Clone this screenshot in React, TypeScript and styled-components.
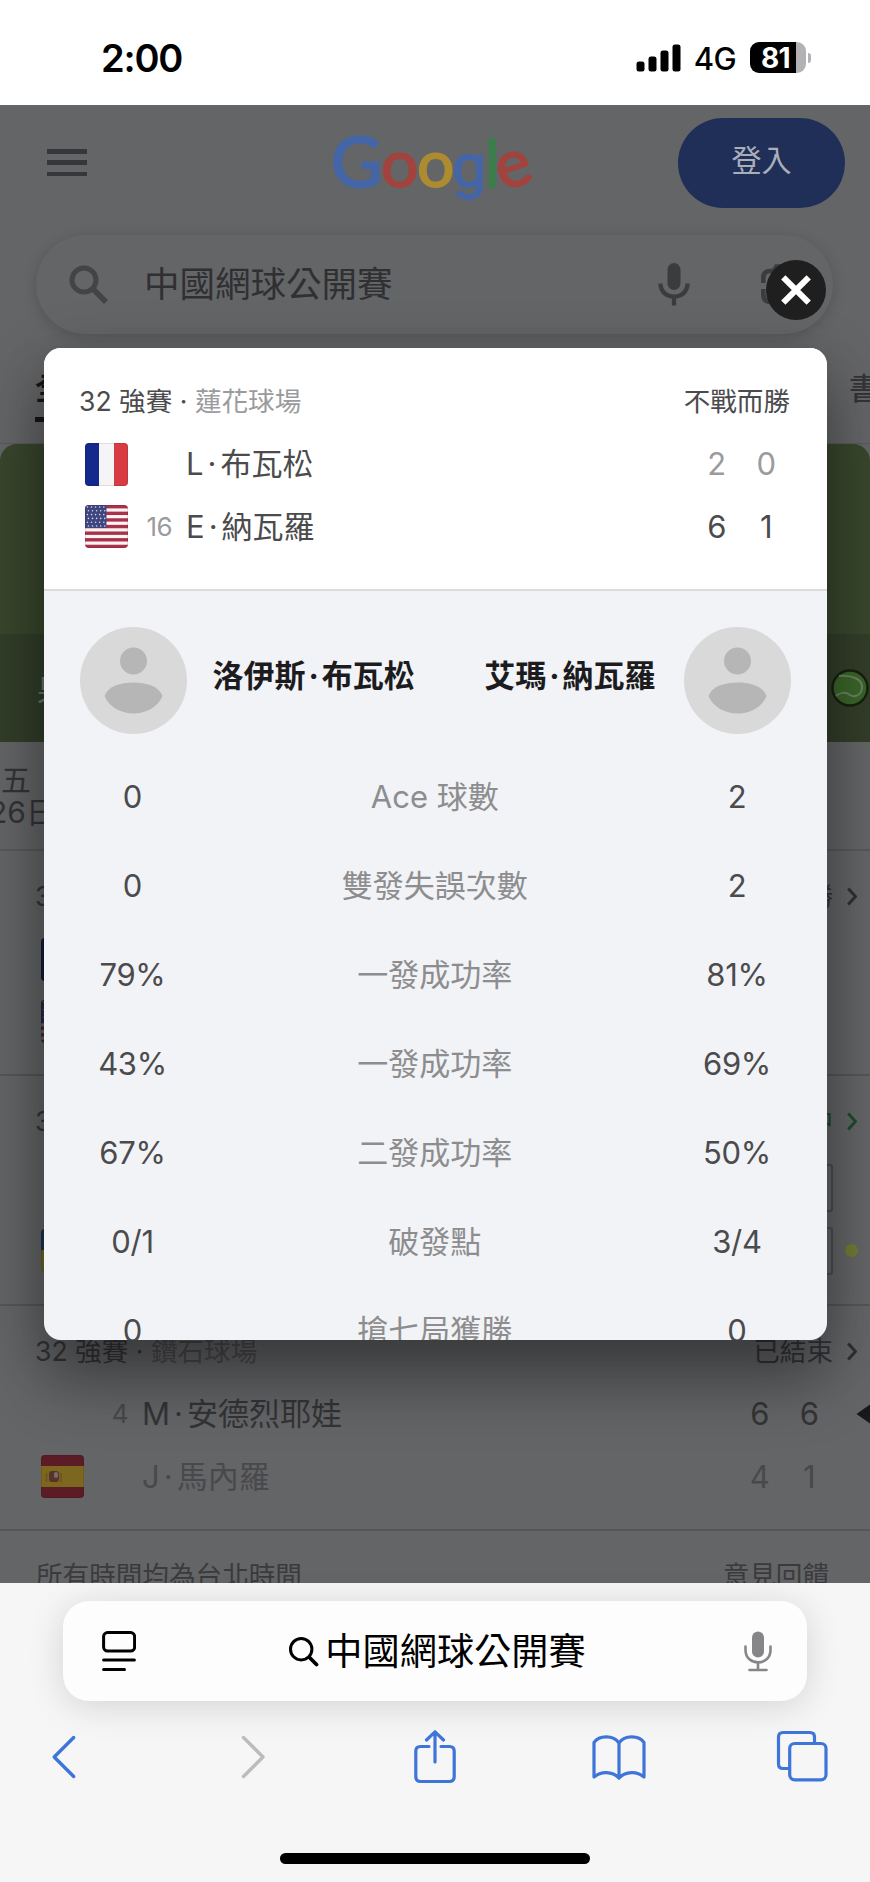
import React from 'react';
import styled, { createGlobalStyle } from 'styled-components';

const GlobalStyle = createGlobalStyle`
  * { box-sizing: border-box; }
  html, body { margin: 0; padding: 0; }
  body {
    width: 870px;
    height: 1882px;
    overflow: hidden;
    background: #fff;
    font-family: Inter, "Noto Sans CJK TC", sans-serif;
    font-size: 31px;
    -webkit-font-smoothing: antialiased;
  }
  svg { display: block; flex: none; }
`;

const Phone = styled.div`
  position: relative;
  width: 870px;
  height: 1882px;
  display: flex;
  flex-direction: column;
  overflow: hidden;
`;

/* ---------- status bar ---------- */

const StatusBar = styled.header`
  height: 105px;
  flex: none;
  display: flex;
  align-items: center;
  justify-content: space-between;
  padding: 10px 59px 0 101px;
  background: #fff;
  color: #000;
`;

const Clock = styled.time`
  font-size: 38px;
  font-weight: 600;
  line-height: 44px;
  letter-spacing: -1.2px;
`;

const StatusIcons = styled.div`
  display: flex;
  align-items: center;
`;

const Network = styled.span`
  width: 56px;
  text-align: center;
  margin: 2px 0 0 6px;
  font-size: 31px;
  font-weight: 450;
  line-height: 32px;
  letter-spacing: -0.5px;
`;

const Battery = styled.div`
  width: 56px;
  height: 31px;
  margin: 0 2px 0 7px;
  border-radius: 9px;
  background: linear-gradient(90deg, #000 46px, #b2b2b4 46px);
  color: #fff;
  font-size: 28px;
  font-weight: 700;
  line-height: 32px;
  letter-spacing: -0.8px;
  padding-left: 11px;
`;

const BatteryCap = styled.div`
  width: 3px;
  height: 10px;
  border-radius: 0 4px 4px 0;
  background: #b2b2b4;
`;

/* ---------- dimmed page ---------- */

const Page = styled.main`
  height: 1478px;
  flex: none;
  overflow: hidden;
  display: flex;
  flex-direction: column;
  background: #646567;
  color: #343437;
`;

const PageHeader = styled.div`
  height: 130px;
  flex: none;
  display: flex;
  padding: 13px 25px 0 47px;
`;

const MenuButton = styled.div`
  width: 40px;
  height: 27px;
  margin-top: 31px;
  display: flex;
  flex-direction: column;
  justify-content: space-between;
`;

const MenuLine = styled.span`
  height: 4.5px;
  background: #37363a;
`;

const LogoBox = styled.div`
  margin: 12px 0 0 245px;
`;

const SignIn = styled.div`
  width: 167px;
  height: 90px;
  margin-left: auto;
  border-radius: 45px;
  background: #1f2f57;
  color: #a9aeb9;
  font-size: 30px;
  line-height: 85px;
  text-align: center;
`;

const SearchPill = styled.div`
  width: 797px;
  height: 99px;
  flex: none;
  margin-left: 36px;
  border-radius: 50px;
  background: #646567;
  box-shadow: 0 3px 14px rgba(0, 0, 0, 0.17);
  display: flex;
  align-items: center;
  padding: 0 32px 0 33px;
  color: #303033;
  font-size: 35.5px;
`;

const Query = styled.span`
  flex: 1;
  padding: 1px 0 0 35px;
  line-height: 44px;
`;

const LensBox = styled.div`
  margin-left: 71px;
`;

const Tabs = styled.nav`
  height: 110px;
  flex: none;
  display: flex;
  justify-content: space-between;
  padding: 33px 0 0 35px;
  font-size: 30px;
  line-height: 42px;
  border-bottom: 1px solid #5a5a5c;
`;

const Tab = styled.span<{ $active?: boolean }>`
  width: ${(p) => (p.$active ? '60px' : '21px')};
  height: 55px;
  overflow: hidden;
  white-space: nowrap;
  color: ${(p) => (p.$active ? '#161617' : '#343437')};
  font-weight: ${(p) => (p.$active ? 700 : 500)};
  border-bottom: ${(p) => (p.$active ? '5px solid #161617' : 'none')};
`;

const Banner = styled.div`
  height: 298px;
  flex: none;
  display: flex;
  flex-direction: column;
  border-radius: 17px 17px 0 0;
  overflow: hidden;
  background: #39472d;
`;

const BannerStrip = styled.div`
  margin-top: auto;
  height: 108px;
  display: flex;
  align-items: center;
  justify-content: space-between;
  padding: 0 1px 0 37px;
  background: #323e29;
  color: #6e756a;
  font-size: 30px;
`;

const DateStrip = styled.div`
  height: 109px;
  flex: none;
  padding: 22px 0 0 1px;
  border-bottom: 2px solid #59595b;
  font-size: 30px;
  line-height: 32px;
`;

const DateLine = styled.div<{ $shift?: number }>`
  margin-left: ${(p) => p.$shift ?? 0}px;
`;

const Card = styled.section<{ $height: number }>`
  height: ${(p) => p.$height}px;
  flex: none;
  padding: 30px 0 0 35px;
  border-bottom: 2px solid #565658;
`;

const PageFooter = styled.div`
  display: flex;
  justify-content: space-between;
  padding: 25px 41px 0 36px;
  font-size: 26.6px;
  line-height: 38px;
  color: #3b3b3e;
`;

/* ---------- match summary ---------- */

const TitleRow = styled.div<{ $live?: boolean }>`
  display: flex;
  justify-content: space-between;
  height: ${(p) => (p.$live ? 51 : 47)}px;
  font-size: 26.6px;
  line-height: 30px;
`;

const Venue = styled.span<{ $color: string }>`
  color: ${(p) => p.$color};
`;

const StatusCell = styled.div<{ $color?: string; $page?: boolean }>`
  display: flex;
  align-items: center;
  height: 30px;
  width: ${(p) => (p.$page ? '150px' : 'auto')};
  justify-content: flex-end;
  gap: 14px;
  padding-right: ${(p) => (p.$page ? '13px' : '1px')};
  color: ${(p) => p.$color ?? 'inherit'};
`;

const PlayerRow = styled.div<{ $color: string }>`
  height: 62.5px;
  display: flex;
  align-items: center;
  color: ${(p) => p.$color};
`;

const FlagSlot = styled.div`
  width: 43px;
  height: 43px;
  margin-left: 6px;
  flex: none;
  display: flex;
`;

const Seed = styled.span<{ $color: string }>`
  width: 44px;
  text-align: right;
  font-size: 26px;
  letter-spacing: -0.6px;
  line-height: 40px;
  color: ${(p) => p.$color};
`;

const PlayerName = styled.span`
  flex: 1;
  padding-left: 14px;
  line-height: 40px;
  white-space: nowrap;
`;

const NameDot = styled.span<{ $gap: number }>`
  padding: 0 ${(p) => p.$gap}px;
`;

const Score = styled.span<{ $color?: string }>`
  width: 49.5px;
  text-align: center;
  line-height: 40px;
  color: ${(p) => p.$color ?? 'inherit'};
`;

const RowEnd = styled.div<{ $width: number }>`
  width: ${(p) => p.$width}px;
  flex: none;
  display: flex;
  justify-content: flex-end;
`;

const ScoreBox = styled.div`
  width: 50px;
  height: 48px;
  border: 2px solid #4d4d4f;
  border-radius: 3px;
  margin-left: auto;
`;

const ServeDot = styled.span<{ $on: boolean }>`
  width: 13px;
  height: 13px;
  margin: 0 12px;
  border-radius: 50%;
  background: ${(p) => (p.$on ? '#727b35' : 'transparent')};
`;

/* ---------- dialog ---------- */

const Dialog = styled.section`
  position: absolute;
  left: 44px;
  top: 348px;
  width: 782.5px;
  height: 992px;
  border-radius: 17px;
  overflow: hidden;
  background: #f2f3f6;
  color: #4b4b4d;
`;

const DialogShade = styled.div`
  position: absolute;
  left: 0;
  top: 105px;
  width: 870px;
  height: 1478px;
  overflow: hidden;

  &::before {
    content: '';
    position: absolute;
    left: 44px;
    top: 243px;
    width: 782px;
    height: 992px;
    border-radius: 17px;
    box-shadow: 0 11px 58px rgba(0, 0, 0, 0.22), 0 45px 62px rgba(0, 0, 0, 0.3);
  }
`;

const DialogHead = styled.div`
  height: 243px;
  padding: 38px 35.5px 0 35px;
  background: #fff;
  border-bottom: 2px solid #dcdcdf;
`;

const Versus = styled.div`
  display: flex;
  align-items: center;
  padding: 35.5px 36px 0 35.5px;
  color: #1c1c1e;
  font-weight: 700;
`;

const VersusName = styled.span<{ $right?: boolean }>`
  flex: 1;
  padding: 0 28px 9px 26px;
  text-align: ${(p) => (p.$right ? 'right' : 'left')};
  line-height: 40px;
  white-space: nowrap;
`;

const Stats = styled.div`
  padding: 18px 36px 0 35px;
`;

const StatRow = styled.div`
  display: grid;
  grid-template-columns: 107px 1fr 107px;
  height: 89.1px;
  line-height: 89px;
  text-align: center;
`;

const StatLabel = styled.span`
  color: #8d8d8f;
`;

const StatValue = styled.span`
  letter-spacing: -0.3px;
`;

const CloseButton = styled.div`
  position: absolute;
  left: 766px;
  top: 260px;
  width: 60px;
  height: 60px;
  border-radius: 50%;
  background: #1f1f1f;
  display: flex;
  align-items: center;
  justify-content: center;
`;

/* ---------- browser chrome ---------- */

const BrowserChrome = styled.footer`
  flex: 1;
  display: flex;
  flex-direction: column;
  align-items: center;
  padding-top: 18px;
  background: #f6f6f7;
`;

const AddressBar = styled.div`
  width: 744px;
  height: 100px;
  flex: none;
  display: flex;
  align-items: center;
  justify-content: space-between;
  padding: 0 35px 0 39px;
  border-radius: 26px;
  background: #fdfdfe;
  box-shadow: 0 5px 36px rgba(0, 0, 0, 0.14);
`;

const Address = styled.div`
  display: flex;
  align-items: center;
  gap: 6px;
  color: #000;
  font-size: 37.2px;
  line-height: 48px;
  padding: 2px 5px 0 0;
`;

const Toolbar = styled.div`
  width: 870px;
  height: 112px;
  display: flex;
  align-items: center;
  justify-content: space-between;
  padding: 0 40px 0 39px;
  margin-bottom: 40px;
`;

const HomeBar = styled.div`
  width: 310px;
  height: 11px;
  border-radius: 6px;
  background: #000;
`;

/* ---------- drawings ---------- */

const SignalIcon = () => (
  <svg width="45" height="28" viewBox="0 0 45 28">
    <rect x="0.5" y="17.5" width="8" height="10" rx="2.5" />
    <rect x="12.5" y="12.5" width="8" height="15" rx="2.5" />
    <rect x="24.5" y="6.5" width="8" height="21" rx="2.5" />
    <rect x="36.5" y="0.5" width="8" height="27" rx="2.5" />
  </svg>
);

const LogoText = styled.text`
  font-family: Lato, sans-serif;
  font-size: 66px;
  stroke-width: 1.8px;
`;

const LogoLetter = styled.tspan<{ $color: string }>`
  fill: ${(p) => p.$color};
  stroke: ${(p) => p.$color};
`;

const LogoCapital = styled(LogoLetter)`
  font-size: 70px;
  stroke-width: 2.4px;
`;

const LogoTail = styled(LogoLetter)`
  font-family: Roboto, sans-serif;
  font-size: 61px;
  stroke-width: 1.4px;
`;

const GoogleLogo = () => (
  <svg width="204" height="80" viewBox="0 0 204 80" overflow="visible">
    <LogoText y="56.5">
      <LogoCapital x="-1" $color="#4566a6">G</LogoCapital>
      <LogoLetter x="49" $color="#a2433e">o</LogoLetter>
      <LogoLetter x="85" $color="#ad8b30">o</LogoLetter>
      <LogoTail x="120" $color="#4566a6">g</LogoTail>
      <LogoLetter x="152.5" $color="#3d7c4c">l</LogoLetter>
      <LogoLetter x="170.5" y="61" rotate="-18" $color="#a2433e">e</LogoLetter>
    </LogoText>
  </svg>
);

const PageSearchIcon = () => (
  <svg width="40" height="40" viewBox="0 0 40 40" fill="none" stroke="#434446">
    <circle cx="15" cy="15" r="12" strokeWidth="5" />
    <path d="M24 24L37 37" strokeWidth="5.5" />
  </svg>
);

const PageMicIcon = () => (
  <svg width="32" height="43" viewBox="0 0 32 43" fill="none" stroke="#3c3c3f">
    <rect x="9.5" y="0" width="13" height="27" rx="6.5" fill="#3c3c3f" stroke="none" />
    <path d="M2.5 20.5C2.5 38 29.5 38 29.5 20.5M16 33v9.5" strokeWidth="4.3" />
  </svg>
);

const LensIcon = () => (
  <svg width="40" height="42" viewBox="0 0 40 42" fill="none" stroke="#3c3c3f" strokeWidth="4.6">
    <path d="M2.3 19v-5Q2.3 7 9.5 7h3l3-4.5h9l3 4.500h3Q37.700 7 37.700 14v5M2.300 25v5Q2.300 38 10 38h10" />
    <circle cx="20" cy="22" r="7" />
  </svg>
);

const BallIcon = () => (
  <svg width="38" height="38" viewBox="0 0 38 38" fill="none">
    <circle cx="19" cy="19" r="17.500" fill="#3a6529" stroke="#17210f" strokeWidth="2.400" />
    <path d="M8 7C21 6 32 10 31 19S22 28 19 26C14 22 8 24 5 27" stroke="#6b8063" strokeWidth="2" />
  </svg>
);

const Chevron = ({ color }: { color: string }) => (
  <svg width="10" height="19" viewBox="0 0 10 19" fill="none" stroke={color} strokeWidth="3">
    <path d="M1.200 1.500L8.500 9.500L1.200 17.500" />
  </svg>
);

const WinnerMark = () => (
  <svg width="14" height="20" viewBox="0 0 14 20">
    <path d="M14 0.500L0.500 10L14 19.500Z" fill="#19191b" />
  </svg>
);

type Country = 'fr' | 'us' | 'es' | 'ua';

const Flag = ({ country, dim }: { country: Country; dim?: boolean }) => {
  const pick = (bright: string, dark: string) => (dim ? dark : bright);
  const clip = `clip-${country}-${dim ? 'page' : 'dialog'}`;
  return (
    <svg width="43" height="43" viewBox="0 0 43 43">
      <clipPath id={clip}>
        <rect width="43" height="43" rx="4" />
      </clipPath>
      <g clipPath={`url(#${clip})`}>
        {country === 'fr' && (
          <>
            <rect width="43" height="43" fill={pick('#f5f5f7', '#656567')} />
            <rect width="14" height="43" fill={pick('#15288c', '#181c3f')} />
            <rect x="29" width="14" height="43" fill={pick('#d83c43', '#5b2024')} />
          </>
        )}
        {country === 'us' && (
          <>
            <rect width="43" height="43" fill={pick('#fbf4f5', '#656567')} />
            {[0, 1, 2, 3, 4, 5, 6].map((i) => (
              <rect key={i} y={i * 6.62} width="43" height="3.400" fill={pick('#a9324a', '#4b2a31')} />
            ))}
            <rect width="21.500" height="23" fill={pick('#3f457f', '#262a45')} />
            {Array.from({ length: 30 }, (_, i) => (
              <circle
                key={i}
                cx={2.400 + (i % 5) * 4.100 + (Math.floor(i / 5) % 2)}
                cy={2 + Math.floor(i / 5) * 3.800}
                r="0.800"
                fill={pick('#d5d6e6', '#555766')}
              />
            ))}
          </>
        )}
        {country === 'es' && (
          <>
            <rect width="43" height="43" fill="#5b1c26" />
            <rect y="11" width="43" height="21" fill="#7d661e" />
            <rect x="8" y="16" width="10" height="11" rx="3" fill="#56322a" />
            <rect x="13" y="17" width="4" height="6" rx="2" fill="#7b6c68" />
            <path d="M5.500 18v9M20 18v9" stroke="#69502b" strokeWidth="1.500" />
          </>
        )}
        {country === 'ua' && (
          <>
            <rect width="43" height="21" fill="#1d3557" />
            <rect y="21" width="43" height="22" fill="#6e6a24" />
          </>
        )}
      </g>
      <rect x="0.500" y="0.500" width="42" height="42" rx="3.500" fill="none" stroke="#00000018" />
    </svg>
  );
};

const Avatar = () => (
  <svg width="107" height="107" viewBox="0 0 107 107">
    <circle cx="53.500" cy="53.500" r="53.500" fill="#d9d9d9" />
    <circle cx="53.500" cy="34" r="13.500" fill="#b6b6b6" />
    <path d="M24.500 69C28 59 41 55.500 53.500 55.500S79 59 82.500 69C78 80 66 86.500 53.500 86.500S29 80 24.500 69Z" fill="#b6b6b6" />
  </svg>
);

const CloseIcon = () => (
  <svg width="32" height="32" viewBox="0 0 32 32" stroke="#fff" strokeWidth="6">
    <path d="M3.300 3.300L28.700 28.700M28.700 3.300L3.300 28.700" />
  </svg>
);

const ReaderIcon = () => (
  <svg width="34" height="41" viewBox="0 0 34 41" fill="none" stroke="#000" strokeWidth="3" strokeLinecap="round">
    <rect x="1.600" y="1.600" width="31" height="18.500" rx="4" />
    <path d="M1.600 29H32.400M1.600 38.600H22.500" />
  </svg>
);

const AddressSearchIcon = () => (
  <svg width="30" height="30" viewBox="0 0 30 30" fill="none" stroke="#000" strokeLinecap="round">
    <circle cx="12.200" cy="12.200" r="10.700" strokeWidth="3" />
    <path d="M20.500 20.500L27.500 27.500" strokeWidth="3.800" />
  </svg>
);

const AddressMicIcon = () => (
  <svg width="28" height="41" viewBox="0 0 28 41" fill="none" stroke="#868688" strokeWidth="2.600" strokeLinecap="round">
    <rect x="8" y="0.500" width="12" height="26" rx="6" fill="#868688" stroke="none" />
    <path d="M1.500 15.500V19C1.500 35.500 26.500 35.500 26.500 19V15.500M14 32V38.500M5.500 39H22.500" />
  </svg>
);

const blue = '#3f75d8';

const BackIcon = () => (
  <svg width="54" height="54" viewBox="0 0 54 54" fill="none" stroke={blue} strokeWidth="3.400" strokeLinecap="round" strokeLinejoin="round">
    <path d="M34.700 7.500L15.200 27L34.700 46.500" />
  </svg>
);

const ForwardIcon = () => (
  <svg width="54" height="54" viewBox="0 0 54 54" fill="none" stroke="#bcbcbe" strokeWidth="3.400" strokeLinecap="round" strokeLinejoin="round">
    <path d="M20.500 7.500L40 27L20.500 46.500" />
  </svg>
);

const ShareIcon = () => (
  <svg width="54" height="54" viewBox="-2 0 54 54" fill="none" stroke={blue} strokeWidth="3.200" strokeLinecap="round" strokeLinejoin="round">
    <path d="M19 16.500H10.500Q5.800 16.500 5.800 21V46.500Q5.800 51.500 10.500 51.500H39.500Q44.200 51.500 44.200 46.500V21Q44.200 16.500 39.500 16.500H31M25 32V2M16.500 10L25 1.800L33.500 10" />
  </svg>
);

const BookIcon = () => (
  <svg width="54" height="54" viewBox="0 0 54 54" fill="none" stroke={blue} strokeWidth="3.200" strokeLinejoin="round">
    <path d="M27 13C21 4.500 7 5.500 2 12.500V47C9 41 20 41 27 48C34 41 45 41 52 47V12.500C47 5.500 33 4.500 27 13ZM27 13V48" />
  </svg>
);

const TabsIcon = () => (
  <svg width="54" height="54" viewBox="0 0 54 54" fill="none" stroke={blue} strokeWidth="3.200">
    <path d="M38.500 13V7Q38.500 2.500 34 2.500H7Q2.500 2.500 2.500 7V34Q2.500 38.500 7 38.500H13.500" />
    <rect x="13.700" y="13.500" width="36.300" height="36.300" rx="5" />
  </svg>
);

/* ---------- data ---------- */

const stats: Array<[string, string, string]> = [
  ['0', 'Ace 球數', '2'],
  ['0', '雙發失誤次數', '2'],
  ['79%', '一發成功率', '81%'],
  ['43%', '一發成功率', '69%'],
  ['67%', '二發成功率', '50%'],
  ['0/1', '破發點', '3/4'],
  ['0', '搶七局獲勝', '0'],
];

/* A player's name with some air on both sides of its middle dot. */
const DottedName = ({ name, gap }: { name: string; gap: number }) => {
  const [first, last] = name.split('·');
  return (
    <>
      {first}
      <NameDot $gap={gap}>·</NameDot>
      {last}
    </>
  );
};

interface PlayerProps {
  country?: Country;
  dim?: boolean;
  seed?: string;
  name: string;
  scores: string[];
  color: string;
  seedColor: string;
  scoreColor?: string;
  winner?: boolean;
}

const Player = ({ country, dim, seed, name, scores, color, seedColor, scoreColor, winner }: PlayerProps) => (
  <PlayerRow $color={color}>
    <FlagSlot>{country && <Flag country={country} dim={dim} />}</FlagSlot>
    <Seed $color={seedColor}>{seed}</Seed>
    <PlayerName>
      <DottedName name={name} gap={4} />
    </PlayerName>
    {scores.map((score, i) => (
      <Score key={i} $color={scoreColor}>{score}</Score>
    ))}
    {dim && <RowEnd $width={36}>{winner && <WinnerMark />}</RowEnd>}
  </PlayerRow>
);

export default function App() {
  return (
    <>
      <GlobalStyle />
      <Phone>
        <StatusBar>
          <Clock>2:00</Clock>
          <StatusIcons>
            <SignalIcon />
            <Network>4G</Network>
            <Battery>81</Battery>
            <BatteryCap />
          </StatusIcons>
        </StatusBar>

        <Page>
          <PageHeader>
            <MenuButton>
              <MenuLine />
              <MenuLine />
              <MenuLine />
            </MenuButton>
            <LogoBox>
              <GoogleLogo />
            </LogoBox>
            <SignIn>登入</SignIn>
          </PageHeader>
          <SearchPill>
            <PageSearchIcon />
            <Query>中國網球公開賽</Query>
            <PageMicIcon />
            <LensBox>
              <LensIcon />
            </LensBox>
          </SearchPill>
          <Tabs>
            <Tab $active>全部</Tab>
            <Tab>書</Tab>
          </Tabs>
          <Banner>
            <BannerStrip>
              <span>果</span>
              <BallIcon />
            </BannerStrip>
          </Banner>
          <DateStrip>
            <DateLine>五</DateLine>
            <DateLine $shift={-12}>26日</DateLine>
          </DateStrip>
          <Card $height={225}>
            <TitleRow>
              <span>32 強賽</span>
              <StatusCell $page>
                不戰而勝 <Chevron color="#303033" />
              </StatusCell>
            </TitleRow>
            <PlayerRow $color="#343437">
              <FlagSlot><Flag country="fr" dim /></FlagSlot>
            </PlayerRow>
            <PlayerRow $color="#343437">
              <FlagSlot><Flag country="us" dim /></FlagSlot>
            </PlayerRow>
          </Card>
          <Card $height={230}>
            <TitleRow $live>
              <span>32 強賽</span>
              <StatusCell $page $color="#1f4a30">
                進行中 <Chevron color="#1f4a30" />
              </StatusCell>
            </TitleRow>
            <PlayerRow $color="#343437">
              <ScoreBox />
              <ServeDot $on={false} />
            </PlayerRow>
            <PlayerRow $color="#343437">
              <FlagSlot><Flag country="ua" dim /></FlagSlot>
              <ScoreBox />
              <ServeDot $on />
            </PlayerRow>
          </Card>
          <Card $height={225}>
            <TitleRow>
              <span>
                32 強賽 · <Venue $color="#49494b">鑽石球場</Venue>
              </span>
              <StatusCell $page>
                已結束 <Chevron color="#303033" />
              </StatusCell>
            </TitleRow>
            <Player dim seed="4" name="M·安德烈耶娃" scores={['6', '6']} color="#343437" seedColor="#48484b" winner />
            <Player dim country="es" name="J·馬內羅" scores={['4', '1']} color="#49494c" seedColor="#48484b" />
          </Card>
          <PageFooter>
            <span>所有時間均為台北時間</span>
            <span>意見回饋</span>
          </PageFooter>
        </Page>

        <BrowserChrome>
          <AddressBar>
            <ReaderIcon />
            <Address>
              <AddressSearchIcon />
              <span>中國網球公開賽</span>
            </Address>
            <AddressMicIcon />
          </AddressBar>
          <Toolbar>
            <BackIcon />
            <ForwardIcon />
            <ShareIcon />
            <BookIcon />
            <TabsIcon />
          </Toolbar>
          <HomeBar />
        </BrowserChrome>

        <DialogShade />
        <Dialog>
          <DialogHead>
            <TitleRow>
              <span>
                32 強賽 · <Venue $color="#9b9b9d">蓮花球場</Venue>
              </span>
              <StatusCell>不戰而勝</StatusCell>
            </TitleRow>
            <Player country="fr" name="L·布瓦松" scores={['2', '0']} color="#4b4b4d" seedColor="#9b9b9d" scoreColor="#9b9b9d" />
            <Player country="us" seed="16" name="E·納瓦羅" scores={['6', '1']} color="#4b4b4d" seedColor="#9b9b9d" />
          </DialogHead>
          <Versus>
            <Avatar />
            <VersusName>
              <DottedName name="洛伊斯·布瓦松" gap={3} />
            </VersusName>
            <VersusName $right>
              <DottedName name="艾瑪·納瓦羅" gap={3} />
            </VersusName>
            <Avatar />
          </Versus>
          <Stats>
            {stats.map(([left, label, right], i) => (
              <StatRow key={i}>
                <StatValue>{left}</StatValue>
                <StatLabel>{label}</StatLabel>
                <StatValue>{right}</StatValue>
              </StatRow>
            ))}
          </Stats>
        </Dialog>
        <CloseButton>
          <CloseIcon />
        </CloseButton>
      </Phone>
    </>
  );
}
